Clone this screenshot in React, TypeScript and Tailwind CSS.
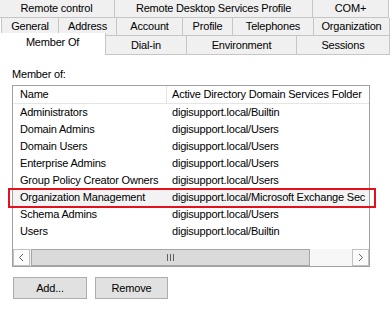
const row1 = [
  { label: "Remote control", w: "w-[116px]" },
  { label: "Remote Desktop Services Profile", w: "w-[198px]" },
  { label: "COM+", w: "w-[76px]" },
];

const row2 = [
  { label: "General", w: "w-[57px]" },
  { label: "Address", w: "w-[58px]" },
  { label: "Account", w: "w-[66px]" },
  { label: "Profile", w: "w-[50px]" },
  { label: "Telephones", w: "w-[81px]" },
  { label: "Organization", w: "w-[76px]" },
];

const row3 = [
  { label: "Dial-in", w: "w-[81px]" },
  { label: "Environment", w: "w-[110px]" },
  { label: "Sessions", w: "w-[93px]" },
];

const groups = [
  { name: "Administrators", folder: "digisupport.local/Builtin" },
  { name: "Domain Admins", folder: "digisupport.local/Users" },
  { name: "Domain Users", folder: "digisupport.local/Users" },
  { name: "Enterprise Admins", folder: "digisupport.local/Users" },
  { name: "Group Policy Creator Owners", folder: "digisupport.local/Users" },
  { name: "Organization Management", folder: "digisupport.local/Microsoft Exchange Sec", selected: true },
  { name: "Schema Admins", folder: "digisupport.local/Users" },
  { name: "Users", folder: "digisupport.local/Builtin" },
];

function Tab({ label, w }: { label: string; w: string }) {
  return (
    <div className={`${w} h-full shrink-0 flex items-center justify-center border-r border-b border-[#c6c6c6] bg-[#f0f0f0] whitespace-nowrap`}>
      {label}
    </div>
  );
}

function Chevron({ dir }: { dir: "left" | "right" }) {
  return (
    <svg width="7" height="9" viewBox="0 0 7 9">
      <polyline
        points={dir === "left" ? "5,1 1.5,4.5 5,8" : "2,1 5.5,4.5 2,8"}
        fill="none"
        stroke="#606060"
        strokeWidth="1"
      />
    </svg>
  );
}

export default function App() {
  return (
    <div className="relative w-[392px] h-[312px] overflow-hidden bg-white text-black text-[11px] leading-none tracking-[-0.2px] font-['Liberation_Sans',Arial,sans-serif]">
      {/* tab rows */}
      <div className="flex h-[18px] -ml-px">
        {row1.map((t) => (
          <Tab key={t.label} {...t} />
        ))}
      </div>
      <div className="flex h-[18px]">
        <div className="w-px h-full border-b border-[#c6c6c6]" />
        <div className="flex h-full border-l border-[#c6c6c6]">
          {row2.map((t) => (
            <Tab key={t.label} {...t} />
          ))}
        </div>
      </div>
      <div className="flex items-start h-[19px]">
        <div className="w-[106px] h-[22px] -mt-[3px] shrink-0 flex items-center justify-center pb-[3px] bg-white border-r border-[#c6c6c6]">
          Member Of
        </div>
        {row3.map((t) => (
          <Tab key={t.label} {...t} />
        ))}
      </div>

      {/* page */}
      <div className="px-[12px]">
        <div className="mt-[13px] h-[12px] flex items-center">Member of:</div>

        <div className="mt-[5px] w-[358px] h-[182px] border border-[#a0a0a0] flex flex-col">
          <div className="flex h-[18px] border-b border-[#e5e5e5]">
            <div className="w-[154px] shrink-0 pl-[7px] flex items-center border-r border-[#e5e5e5]">Name</div>
            <div className="flex-1 pl-[5px] flex items-center whitespace-nowrap overflow-hidden">
              Active Directory Domain Services Folder
            </div>
          </div>
          {groups.map((g) => (
            <div key={g.name} className={`flex h-[17px] shrink-0 ${g.selected ? "bg-[#f3f3f3]" : ""}`}>
              <div className="w-[154px] shrink-0 pl-[7px] flex items-center whitespace-nowrap overflow-hidden">{g.name}</div>
              <div className="flex-1 pl-[5px] flex items-center whitespace-nowrap overflow-hidden">{g.folder}</div>
            </div>
          ))}

          <div className="mt-auto flex h-[17px] bg-[#f0f0f0]">
            <div className="w-[17px] h-full flex items-center justify-center bg-[#fbfbfb] border border-[#c0c0c0]">
              <Chevron dir="left" />
            </div>
            <div className="ml-px w-[279px] h-full flex items-center justify-center gap-[2px] bg-[#dadada] border border-[#a6a6a6]">
              <span className="w-px h-[7px] bg-[#606060]" />
              <span className="w-px h-[7px] bg-[#606060]" />
              <span className="w-px h-[7px] bg-[#606060]" />
            </div>
            <div className="flex-1 bg-[#f7f7f7]" />
            <div className="w-[17px] h-full flex items-center justify-center bg-[#fbfbfb] border border-[#c0c0c0]">
              <Chevron dir="right" />
            </div>
          </div>
        </div>

        <div className="mt-[10px] ml-px flex gap-[8px]">
          <button className="w-[74px] h-[22px] flex items-center justify-center bg-[#e1e1e1] border border-[#adadad]">
            Add...
          </button>
          <button className="w-[73px] h-[22px] flex items-center justify-center bg-[#e1e1e1] border border-[#adadad]">
            Remove
          </button>
        </div>
      </div>

      {/* highlight annotation */}
      <div className="absolute left-[8px] top-[188px] w-[368px] h-[20px] border-2 border-[#e3111c] pointer-events-none" />
    </div>
  );
}
